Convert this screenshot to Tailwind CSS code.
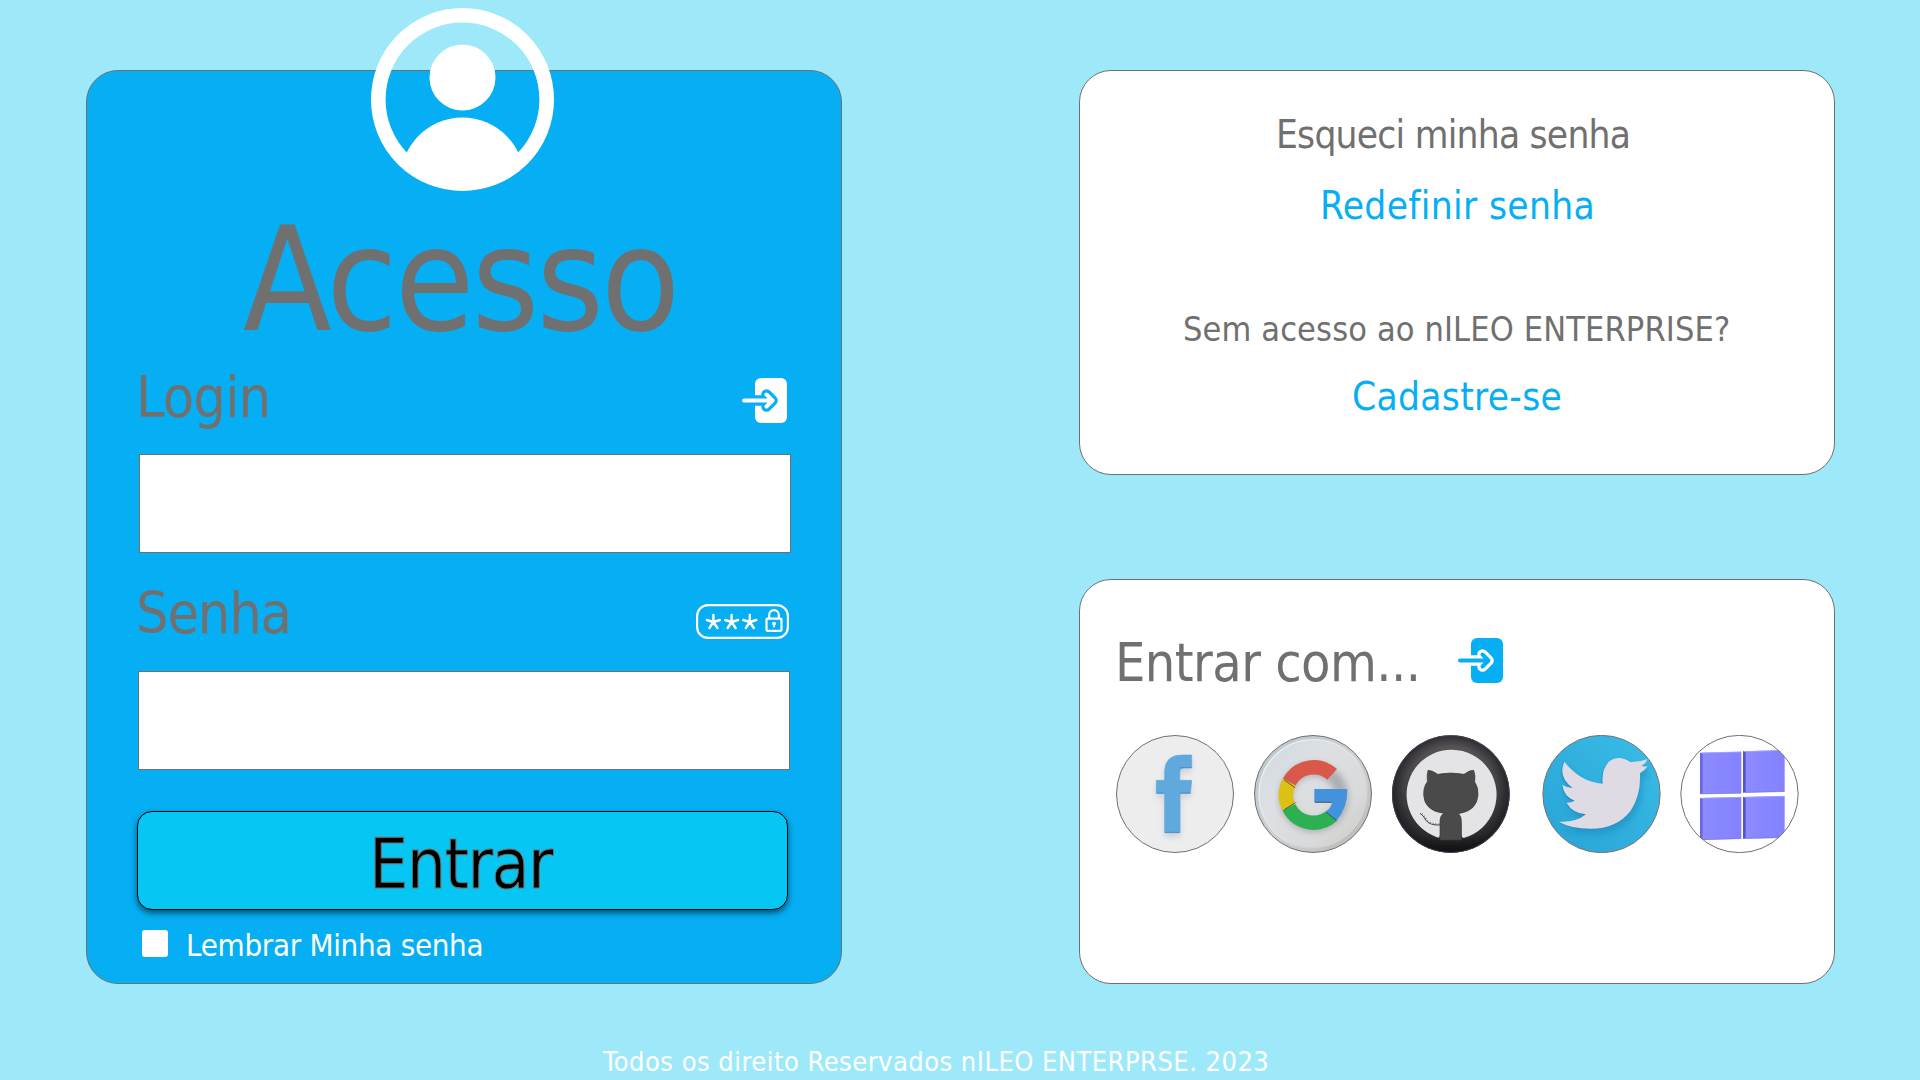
<!DOCTYPE html>
<html lang="pt-BR">
<head>
<meta charset="utf-8">
<title>nILEO ENTERPRISE</title>
<script src="https://cdn.jsdelivr.net/npm/@tailwindcss/browser@4"></script>
</head>
<body class="flex h-[1080px] w-[1920px] flex-col overflow-hidden bg-[#9de9f9] font-['DejaVu_Sans_Condensed','DejaVu_Sans',sans-serif] whitespace-nowrap text-[#707070]">
<main class="flex items-start gap-[237px] pt-[70px] pl-[86px]">

  <!-- Login card -->
  <form class="relative flex h-[914px] w-[756px] flex-col rounded-[32px] border border-[#707070] bg-[#06aff4] pt-[137px]">
    <svg class="absolute top-[-63px] left-[284px]" width="183" height="183" viewBox="0 0 183 183" fill="#fff">
      <clipPath id="disc"><circle cx="91.5" cy="91.5" r="88"/></clipPath>
      <circle cx="91.5" cy="91.5" r="84.2" fill="none" stroke="#fff" stroke-width="14.6"/>
      <circle cx="91.5" cy="69.5" r="33"/>
      <circle cx="91.5" cy="171.5" r="62" clip-path="url(#disc)"/>
    </svg>
    <h1 class="pl-[156px] text-[144px] leading-[144px] tracking-[-2.78px]">Acesso</h1>

    <div class="mt-[13px] flex h-16 justify-between pr-[54px] pl-[49px]">
      <label for="login" class="text-[57px] leading-[64px] tracking-[-0.78px]">Login</label>
      <svg class="mt-[13px]" width="45" height="45" viewBox="0 0 45 45" fill="none" stroke-linecap="round" stroke-linejoin="round">
        <rect x="13" width="32" height="45" rx="6" fill="#fff"/>
        <path d="M2 22.5H30M24.5 16.5l6 6-6 6" stroke="#06aff4" stroke-width="10.5"/>
        <path d="M2 22.5H30M24.5 16.5l6 6-6 6" stroke="#fff" stroke-width="4"/>
      </svg>
    </div>
    <input id="login" class="mt-[25px] ml-[52px] h-[99px] w-[652px] border border-[#707070] bg-white">

    <div class="mt-7 flex h-16 justify-between pr-[52px] pl-[49px]">
      <label for="senha" class="text-[57px] leading-[64px] tracking-[-1.16px]">Senha</label>
      <svg class="mt-[23px]" width="93" height="35" viewBox="0 0 93 35" fill="none" stroke="#fff" stroke-width="2.2">
        <rect x="1.1" y="1.1" width="90.8" height="32.8" rx="11"/>
        <g stroke-width="2.4" stroke-linecap="round">
          <path d="M17.4 18V11M17.4 18l-6.5-2M17.4 18l6.5-2M17.4 18l-4 6M17.4 18l4 6"/>
          <path d="M35.6 18V11M35.6 18l-6.5-2M35.6 18l6.5-2M35.6 18l-4 6M35.6 18l4 6"/>
          <path d="M53.8 18V11M53.8 18l-6.5-2M53.8 18l6.5-2M53.8 18l-4 6M53.8 18l4 6"/>
        </g>
        <rect x="70.5" y="14.6" width="15" height="12.2" rx="1"/>
        <path d="M73.2 14.5V11a4.8 4.8 0 0 1 9.6 0v3.5"/>
        <path d="M78 21.500V23.200" stroke-width="2"/><circle cx="78" cy="19.700" r="1.900" fill="#fff" stroke="none"/>
      </svg>
    </div>
    <input id="senha" type="password" class="mt-[26px] ml-[51px] h-[99px] w-[652px] border border-[#707070] bg-white">

    <button type="button" class="mt-[41px] ml-[50px] h-[99px] w-[651px] rounded-[15px] border border-black bg-[#06c7f4] pl-[231px] text-left shadow-[0_3px_6px_rgba(0,0,0,0.55)]">
      <span class="block pt-px text-[69px] leading-[102px] tracking-[-1.49px] text-black [-webkit-text-stroke:1px_#707070]">Entrar</span>
    </button>

    <label class="mt-[15px] flex h-10 items-start pl-[55px] text-white">
      <input type="checkbox" class="mt-[5px] h-[27px] w-[26px] appearance-none rounded-[3px] bg-white">
      <span class="ml-[18px] text-[31px] leading-[40px] tracking-[-0.31px]">Lembrar Minha senha</span>
    </label>
  </form>

  <div class="flex flex-col gap-[104px]">
    <!-- Account help -->
    <section class="flex h-[405px] w-[756px] flex-col rounded-[32px] border border-[#707070] bg-white pt-10">
      <p class="pl-[196px] text-[38.5px] leading-[48px] tracking-[-0.77px]">Esqueci minha senha</p>
      <a class="mt-[23px] pl-[240px] text-[38.5px] leading-[48px] tracking-[0.34px] text-[#06aff4]">Redefinir senha</a>
      <p class="mt-[75px] pl-[103px] text-[34px] leading-[48px] tracking-[0.13px]">Sem acesso ao nILEO ENTERPRISE?</p>
      <a class="mt-5 pl-[272px] text-[38.5px] leading-[48px] tracking-[0.3px] text-[#06aff4]">Cadastre-se</a>
    </section>

    <!-- Social sign-in -->
    <section class="flex h-[405px] w-[756px] flex-col rounded-[32px] border border-[#707070] bg-white pt-[51px]">
      <div class="flex h-16 items-start pl-[35px]">
        <h2 class="w-[343px] text-[53.5px] leading-[64px] tracking-[-0.56px]">Entrar com...</h2>
        <svg class="mt-[7px]" width="45" height="45" viewBox="0 0 45 45" fill="none" stroke-linecap="round" stroke-linejoin="round">
          <rect x="13" width="32" height="45" rx="6" fill="#06aff4"/>
          <path d="M2 22.5H30M24.5 16.5l6 6-6 6" stroke="#fff" stroke-width="10.5"/>
          <path d="M2 22.5H30M24.5 16.5l6 6-6 6" stroke="#06aff4" stroke-width="4"/>
        </svg>
      </div>

      <div class="mt-10 flex pl-9">
        <!-- Facebook -->
        <svg width="118" height="118" viewBox="48 45 354 354">
          <defs>
            <filter id="soft" x="-30%" y="-30%" width="160%" height="160%"><feGaussianBlur stdDeviation="9"/></filter>
            <path id="fb" d="M194 338V220H169V181H194V152Q196 105 246 105H275V143H252Q239 144 239 158V181H275L271 220H240V338Z"/>
          </defs>
          <circle cx="225" cy="222" r="175.500" fill="#ededee"/>
          <use href="#fb" y="12" fill="#b9bdcc" opacity=".65" filter="url(#soft)"/>
          <use href="#fb" fill="#5fa9dc" stroke="#5fa9dc" stroke-width="2" stroke-linejoin="round"/>
          <path d="M195 337H239M170 219H193M240 219H271M240 143H274" stroke="#4a8fc4" stroke-width="3"/>
          <circle cx="225" cy="222" r="175.500" fill="none" stroke="#707070" stroke-width="3"/>
        </svg>

        <!-- Google -->
        <svg class="ml-5" width="118" height="118" viewBox="462 45 354 354">
          <defs>
            <linearGradient id="rim" x1="0" y1="0" x2="1" y2="1"><stop offset="0" stop-color="#b9c6cc"/><stop offset=".5" stop-color="#cdd1d2"/><stop offset="1" stop-color="#b8bcb6"/></linearGradient>
            <linearGradient id="dish" x1="0" y1="0" x2="1" y2="1"><stop offset="0" stop-color="#cfdbe3"/><stop offset=".35" stop-color="#dddfe2"/><stop offset=".7" stop-color="#d9dadb"/><stop offset="1" stop-color="#cbcbc0"/></linearGradient>
            <linearGradient id="edge" x1="0" y1="0" x2="1" y2="1"><stop offset="0" stop-color="#edf5f9"/><stop offset=".55" stop-color="#e1e4e4"/><stop offset="1" stop-color="#a9aca5"/></linearGradient>
          </defs>
          <circle cx="639" cy="222" r="175.500" fill="url(#rim)"/>
          <circle cx="640" cy="222" r="163" fill="url(#dish)" stroke="url(#edge)" stroke-width="4"/>
          <circle cx="641" cy="232" r="84" fill="none" stroke="#85888f" stroke-width="40" opacity=".55" filter="url(#soft)"/>
          <g fill="none" stroke-width="43">
            <path d="M696.500 163.300A83 83 0 0 0 567.400 186.500" stroke="#d9584a"/>
            <path d="M567.400 186.500A83 83 0 0 0 566.700 262" stroke="#dcc113"/>
            <path d="M566.700 262A83 83 0 0 0 697.200 286" stroke="#2db052"/>
          </g>
          <path d="M643 207H742Q743 263 710 301L678 277Q692 264 698 247H643Z" fill="#4292dc"/>
          <path d="M553 180L585 203M553 269L586 248M679 277L709 301M645 247H697" stroke="#37434c" stroke-width="2.500"/>
          <circle cx="639" cy="222" r="175.500" fill="none" stroke="#707070" stroke-width="3"/>
        </svg>

        <!-- GitHub -->
        <svg class="ml-5" width="118" height="118" viewBox="37 45 354 354">
          <defs>
            <linearGradient id="coal" x1="0" y1="0" x2="0" y2="1"><stop offset="0" stop-color="#5b585b"/><stop offset=".4" stop-color="#454346"/><stop offset=".85" stop-color="#2c2c2c"/><stop offset="1" stop-color="#0d0d0d"/></linearGradient>
            <radialGradient id="vign"><stop offset=".8" stop-color="#15131e" stop-opacity="0"/><stop offset="1" stop-color="#15131e" stop-opacity=".65"/></radialGradient>
          </defs>
          <circle cx="213.500" cy="222" r="176.500" fill="url(#coal)"/>
          <circle cx="213.500" cy="222" r="176.500" fill="url(#vign)"/>
          <path d="M176 353Q181 351 181 344V310H245V344Q245 352 252 354A135 135 0 1 0 176 353Z" fill="#e4e4e6"/>
          <path d="M145 151Q158 151 174 163Q213 155 253 163Q270 150 282 151Q288 166 285 186Q297 203 295 225Q292 273 236 281Q245 288 245 301V360H181V301Q182 287 192 280Q134 272 132 225Q131 201 143 185Q141 165 145 151Z" fill="#4a4a4b" stroke="#3b3b3c" stroke-width="2"/>
          <path d="M121 280Q132 286 138 300Q149 317 184 315" fill="none" stroke="#4a4a4b" stroke-width="3"/>
          <path d="M126 282Q136 290 142 302Q154 313 184 312" fill="none" stroke="#3a3a3b" stroke-width="5" stroke-dasharray="2 7"/>
          <circle cx="213.500" cy="222" r="175.500" fill="none" stroke="#4f4f52" stroke-width="2"/>
        </svg>

        <!-- Twitter -->
        <svg class="ml-8" width="119" height="118" viewBox="486 45 357 354">
          <defs>
            <clipPath id="tw"><circle cx="664.500" cy="222" r="175.500"/></clipPath>
            <linearGradient id="sky" x1="1" y1="0" x2="0" y2="1"><stop offset="0" stop-color="#3bbce7"/><stop offset="1" stop-color="#27a4d6"/></linearGradient>
            <path id="bird" d="M553 125Q602 187 668 191Q664 146 688 124Q715 103 751 126Q779 127 802 117Q798 131 784 138Q793 140 803 139Q796 150 780 160Q783 226 752 272Q710 326 632 326Q573 326 536 305Q588 308 618 283Q579 281 559 248Q571 249 584 242Q551 230 547 195Q560 203 578 204Q533 172 553 125Z"/>
          </defs>
          <circle cx="664.500" cy="222" r="175.500" fill="url(#sky)"/>
          <g clip-path="url(#tw)">
            <use href="#bird" x="7" y="17" fill="#1b86b8" opacity=".55" filter="url(#soft)"/>
            <use href="#bird" x="-3" y="2" fill="#1589bd" opacity=".6"/>
            <use href="#bird" fill="#dfdbe4"/>
          </g>
          <circle cx="664.500" cy="222" r="176" fill="none" stroke="#707070" stroke-width="3"/>
        </svg>

        <!-- Microsoft -->
        <svg class="ml-[19px]" width="119" height="118" viewBox="61 45 357 354">
          <defs>
            <clipPath id="ms"><circle cx="239" cy="222" r="175.500"/></clipPath>
            <linearGradient id="pane" x1="0" y1="0" x2="1" y2="0"><stop offset="0" stop-color="#8e8cff"/><stop offset="1" stop-color="#8381ff"/></linearGradient>
          </defs>
          <circle cx="239" cy="222" r="175.500" fill="#fff"/>
          <g clip-path="url(#ms)" fill="url(#pane)">
            <path d="M121 98L245 95V220L121 222Z"/>
            <path d="M250 94L375 90V215L250 218Z"/>
            <path d="M121 234L245 231V356L121 360Z"/>
            <path d="M250 231L375 228V353L250 356Z"/>
            <g fill="#6a67dc">
              <path d="M121 98L129 101V220L121 222Z"/>
              <path d="M121 234L129 237V357L121 360Z"/>
            </g>
            <g fill="#5654c4">
              <path d="M250 94L258 97V215L250 218Z"/>
              <path d="M250 231L258 234V354L250 356Z"/>
            </g>
            <path d="M124 221.500L244 219.500M255 217L374 214.500M124 359L244 355.500M255 355.500L374 352.500" stroke="#7371e0" stroke-width="2"/>
            <path d="M124 99L244 96M254 95L374 91M124 235L244 232M254 232L374 229" stroke="#a5a4ff" stroke-width="2.500"/>
          </g>
          <circle cx="239.500" cy="222" r="176" fill="none" stroke="#707070" stroke-width="3"/>
        </svg>
      </div>
    </section>
  </div>
</main>

<footer class="mt-[62px] pl-[603px] text-[27px] leading-[32px] tracking-[0.48px] text-white">Todos os direito Reservados nILEO ENTERPRSE. 2023</footer>
</body>
</html>
